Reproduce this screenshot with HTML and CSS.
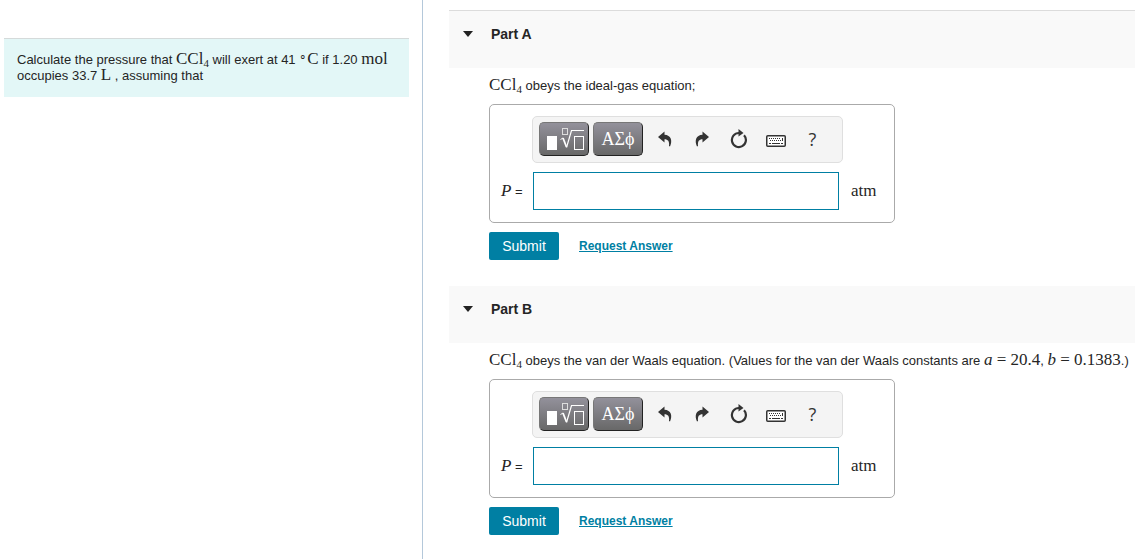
FILE: index.html
```html
<!DOCTYPE html>
<html lang="en">
<head>
  <meta charset="UTF-8">
  <title>Gas Pressure Problem</title>
  <link rel="stylesheet" href="styles.css">
</head>
<body>

<svg class="defs" aria-hidden="true">
  <symbol id="icon-template" viewBox="0 0 40 24">
    <rect x="3" y="9" width="10" height="14" fill="#fff"/>
    <g fill="none" stroke="#fff">
      <rect x="18.500" y="1.500" width="5" height="6" stroke="#ddd"/>
      <path d="M16.500 12.500l2.500-1.500" />
      <path d="M19 11l3.500 9" stroke-width="1.800"/>
      <path d="M22.500 20.500l5-17H40" stroke-width="1.200"/>
      <rect x="30.500" y="9.500" width="9" height="13"/>
    </g>
  </symbol>
  <symbol id="icon-undo" viewBox="0 0 16 16">
    <path d="M7.500.500L1 6l6.500 5.500V8.300c3.500 0 5 2 4.500 6.700l1 .5C15.800 9.500 14 4 7.500 3.700z" fill="#333"/>
  </symbol>
  <symbol id="icon-redo" viewBox="0 0 16 16">
    <path d="M8.500.500L15 6l-6.500 5.500V8.300c-3.500 0-5 2-4.500 6.700l-1 .5C.200 9.500 2 4 8.500 3.700z" fill="#333"/>
  </symbol>
  <symbol id="icon-reset" viewBox="0 0 18 20">
    <path d="M14 6.200a7 7 0 1 1-5-2.200" fill="none" stroke="#333" stroke-width="2.200"/>
    <path d="M8.500 0l5 4-5 3.500z" fill="#333"/>
  </symbol>
  <symbol id="icon-keyboard" viewBox="0 0 20 12">
    <rect x="0.750" y="0.750" width="18.500" height="10.500" rx="1" fill="#fff" stroke="#333" stroke-width="1.500"/>
    <path d="M3 3.500h12M4 5.500h11" stroke="#333" stroke-dasharray="1 1"/>
    <path d="M3 8.500h2M6 8.500h8M15 8.500h2M16.500 3v3" stroke="#333"/>
  </symbol>
</svg>

<div class="page">
  <aside class="sidebar">
    <div class="problem">
      Calculate the pressure that <span class="math">CCl<sub>4</sub></span> will exert at 41 <span class="math"><span class="deg">∘</span>C</span> if 1.20 <span class="math">mol</span> occupies 33.7 <span class="math">L</span> , assuming that
    </div>
  </aside>

  <main class="parts">
    <section class="part">
      <h2 class="part-header">
        <button type="button" class="toggle" aria-expanded="true"><span class="caret"></span>Part A</button>
      </h2>
      <form class="part-body">
        <p class="question"><span class="math">CCl<sub>4</sub></span> obeys the ideal-gas equation;</p>
        <div class="answer">
          <div class="toolbar">
            <button type="button" class="key" aria-label="Templates"><svg class="template"><use href="#icon-template"/></svg></button>
            <button type="button" class="key">ΑΣϕ</button>
            <button type="button" class="tool" aria-label="Undo"><svg class="arrow"><use href="#icon-undo"/></svg></button>
            <button type="button" class="tool" aria-label="Redo"><svg class="arrow"><use href="#icon-redo"/></svg></button>
            <button type="button" class="tool" aria-label="Reset"><svg class="reset"><use href="#icon-reset"/></svg></button>
            <button type="button" class="tool" aria-label="Keyboard shortcuts"><svg class="keyboard"><use href="#icon-keyboard"/></svg></button>
            <button type="button" class="tool">?</button>
          </div>
          <label for="pressureA"><i class="math">P</i> =</label>
          <input type="text" id="pressureA">
          <span class="math unit">atm</span>
        </div>
        <div class="actions">
          <button type="submit" class="submit">Submit</button>
          <a href="#">Request Answer</a>
        </div>
      </form>
    </section>

    <section class="part">
      <h2 class="part-header">
        <button type="button" class="toggle" aria-expanded="true"><span class="caret"></span>Part B</button>
      </h2>
      <form class="part-body">
        <p class="question"><span class="math">CCl<sub>4</sub></span> obeys the van der Waals equation. (Values for the van der Waals constants are <span class="math"><i>a</i> = 20.4</span>, <span class="math"><i>b</i> = 0.1383</span>.)</p>
        <div class="answer">
          <div class="toolbar">
            <button type="button" class="key" aria-label="Templates"><svg class="template"><use href="#icon-template"/></svg></button>
            <button type="button" class="key">ΑΣϕ</button>
            <button type="button" class="tool" aria-label="Undo"><svg class="arrow"><use href="#icon-undo"/></svg></button>
            <button type="button" class="tool" aria-label="Redo"><svg class="arrow"><use href="#icon-redo"/></svg></button>
            <button type="button" class="tool" aria-label="Reset"><svg class="reset"><use href="#icon-reset"/></svg></button>
            <button type="button" class="tool" aria-label="Keyboard shortcuts"><svg class="keyboard"><use href="#icon-keyboard"/></svg></button>
            <button type="button" class="tool">?</button>
          </div>
          <label for="pressureB"><i class="math">P</i> =</label>
          <input type="text" id="pressureB">
          <span class="math unit">atm</span>
        </div>
        <div class="actions">
          <button type="submit" class="submit">Submit</button>
          <a href="#">Request Answer</a>
        </div>
      </form>
    </section>
  </main>
</div>

</body>
</html>
```
FILE: styles.css
```css
* {
  box-sizing: border-box;
}
body {
  margin: 0;
  background: #fff;
  color: #252525;
  font-family: "Liberation Sans", Arial, sans-serif;
  font-size: 13px;
}
button {
  font-family: inherit;
  padding: 0;
  border: none;
  background: none;
  color: inherit;
  cursor: pointer;
}
.defs {
  display: none;
}
.page {
  display: grid;
  grid-template-columns: 423fr 712fr;
  min-height: 100vh;
}

.sidebar {
  padding: 38px 13px 0 4px;
  border-right: 1px solid #b4c8da;
}
.problem {
  padding: 13px 12px 13px 13px;
  border-top: 1px solid #d5dada;
  background: #e3f7f7;
  line-height: 16px;
}
.math {
  font-family: "Liberation Serif", "Times New Roman", serif;
  font-size: 17px;
  line-height: 0;
}
.math sub {
  font-size: 11px;
  vertical-align: -3px;
}
.deg {
  font-size: 12px;
  vertical-align: 3px;
}

.parts {
  padding: 10px 0 0 26px;
  min-width: 0;
}
.part-header {
  margin: 0;
  padding: 0 14px;
  background: #f9f9f9;
}
.part:first-child .part-header {
  border-top: 1px solid #dcdcdc;
}
.toggle {
  display: flex;
  align-items: center;
  gap: 18px;
  height: 57px;
  padding-bottom: 12px;
  font-size: 14px;
  font-weight: bold;
}
.caret {
  border: 5px solid transparent;
  border-top: 6px solid #222;
  border-bottom: 0;
}
.part-body {
  padding: 8px 0 26px 40px;
}
.question {
  margin: 0 0 8px;
  line-height: 20px;
}

.answer {
  display: grid;
  grid-template-columns: 43px 1fr 55px;
  row-gap: 9px;
  align-items: center;
  max-width: 406px;
  padding: 11px 0 12px;
  border: 1px solid #aaa;
  border-radius: 5px;
}
.toolbar {
  grid-column: 2 / 4;
  display: flex;
  align-items: center;
  gap: 4px;
  width: 311px;
  height: 47px;
  margin-left: -1px;
  padding: 0 6px 1px;
  border: 1px solid #dfdfdf;
  border-radius: 5px;
  background: #f4f4f4;
}
.key {
  display: flex;
  align-items: center;
  justify-content: center;
  width: 50px;
  height: 34px;
  border: 1px solid #222;
  border-top-color: #777;
  border-left-color: #777;
  border-radius: 5px;
  background: linear-gradient(#93919b, #686868);
  color: #fff;
  font-family: "Liberation Serif", serif;
  font-size: 18px;
  line-height: 16px;
}
.key + .tool {
  margin-left: 1px;
}
.tool {
  display: flex;
  align-items: center;
  justify-content: center;
  width: 33px;
  height: 34px;
  color: #333;
  font-family: "Open Sans", sans-serif;
  font-size: 18px;
}
.template {
  width: 40px;
  height: 24px;
}
.arrow {
  width: 16px;
  height: 16px;
}
.reset {
  width: 18px;
  height: 20px;
}
.keyboard {
  width: 20px;
  height: 12px;
  margin-top: 4px;
}
.answer label {
  padding-left: 11px;
}
.answer input {
  width: 100%;
  height: 38px;
  padding: 0 8px;
  border: 1px solid #007fa3;
  background: #fff;
  font-size: 16px;
}
.unit {
  padding-left: 12px;
}

.actions {
  display: flex;
  align-items: center;
  gap: 20px;
  margin-top: 9px;
}
.submit {
  width: 70px;
  height: 28px;
  border-radius: 2px;
  background: #007fa3;
  color: #fff;
  font-size: 14px;
}
.actions a {
  color: #007fa3;
  font-size: 12px;
  font-weight: bold;
}
```
